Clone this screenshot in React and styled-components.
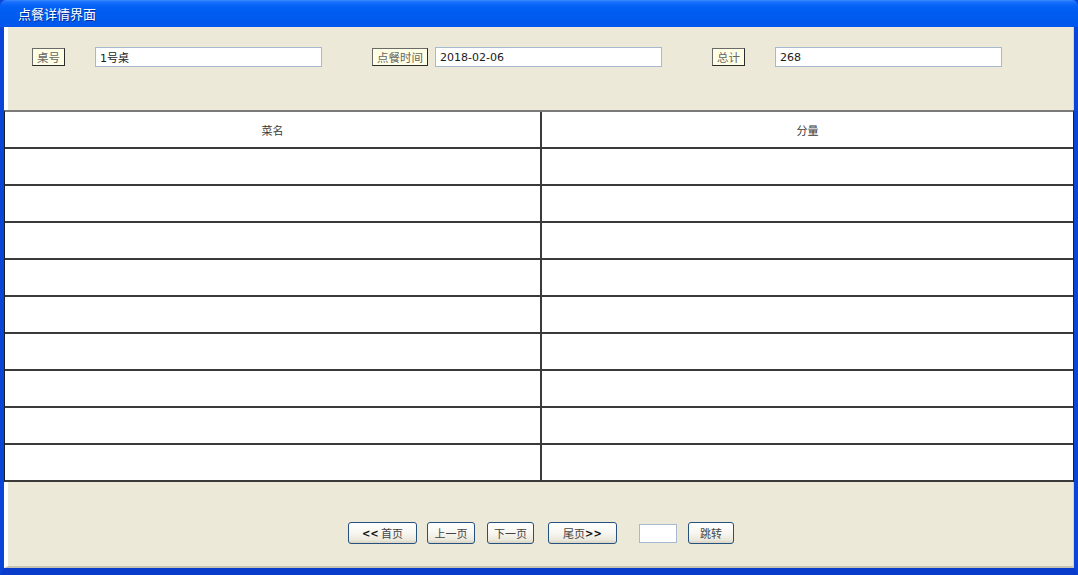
import React from "react";
import styled, { createGlobalStyle } from "styled-components";

const GlobalStyle = createGlobalStyle`
  html, body {
    margin: 0;
    padding: 0;
    background: #ffffff;
  }
  body {
    font-family: "DejaVu Sans", "Noto Sans CJK SC", sans-serif;
  }
`;

const Window = styled.div`
  width: 1078px;
  height: 575px;
  box-sizing: border-box;
  display: flex;
  flex-direction: column;
  background: #0a4fe0;
  border-left: 4px solid #0a45d8;
  border-right: 4px solid #0a45d8;
  border-bottom: 7px solid #0a3ccc;
  border-top: 0;
`;

const TitleBar = styled.div`
  height: 27px;
  margin: 0 -4px;
  padding-left: 18px;
  display: flex;
  align-items: center;
  background: linear-gradient(
    #3b8cff 0,
    #1a6ffc 2px,
    #0461f5 6px,
    #005cf0 50%,
    #0056ea 100%
  );
  border-radius: 6px 6px 0 0;
  color: #ffffff;
  font-family: "Noto Sans CJK SC", sans-serif;
  font-size: 13px;
  text-shadow: 1px 1px 0 #0a2e9a;
`;

const Body = styled.div`
  flex: 1;
  display: flex;
  flex-direction: column;
  background: #ffffff;
`;

const TopPanel = styled.div`
  height: 83px;
  box-sizing: border-box;
  background: #ece9d8;
  border-left: 4px solid #ffffff;
  border-right: 1px solid #d6d2c2;
  padding: 20px 0 0 24px;
  display: grid;
  grid-template-columns: repeat(3, 340px);
  align-items: start;
`;

const Field = styled.div`
  display: grid;
  grid-template-columns: 63px 227px;
  align-items: center;
`;

const Label = styled.span`
  justify-self: start;
  height: 18px;
  box-sizing: border-box;
  padding: 0 4px;
  display: flex;
  align-items: center;
  background: #ffffe6;
  border: 1px solid #2b2b2b;
  border-top-color: #6a6a6a;
  border-left-color: #6a6a6a;
  color: #666666;
  font-family: "Noto Sans CJK SC", sans-serif;
  font-size: 11.5px;
`;

const TextBox = styled.div`
  height: 20px;
  width: ${({ $w }) => $w || "227px"};
  box-sizing: border-box;
  background: #ffffff;
  border: 1px solid #a5b9cf;
  padding-left: 4px;
  display: flex;
  align-items: center;
  color: #1a1a1a;
  font-family: "DejaVu Sans", "Noto Sans CJK SC", sans-serif;
  font-size: 11px;
`;

const Table = styled.div`
  display: grid;
  grid-template-columns: 537px 1fr;
  grid-auto-rows: 37px;
  border-top: 2px solid #7a7a7a;
  border-left: 1px solid #1e1e1e;
  border-right: 1px solid #1e1e1e;
`;

const Cell = styled.div`
  box-sizing: border-box;
  border-bottom: 2px solid #3a3a3a;
  border-right: ${({ $first }) => ($first ? "2px solid #3a3a3a" : "0")};
  display: flex;
  align-items: center;
  justify-content: center;
  color: #3a3a3a;
  font-family: "Noto Sans CJK SC", sans-serif;
  font-size: 11px;
  background: #ffffff;
`;

const BottomPanel = styled.div`
  flex: 1;
  box-sizing: border-box;
  background: #ece9d8;
  border-left: 4px solid #ffffff;
  border-right: 1px solid #d6d2c2;
  border-bottom: 2px solid #c8c4b4;
  padding: 40px 0 0 340px;
  display: flex;
  align-items: flex-start;
`;

const Button = styled.button`
  height: 22px;
  width: ${({ $w }) => $w}px;
  margin-left: ${({ $ml }) => $ml || 0}px;
  padding: 0;
  box-sizing: border-box;
  border: 1px solid #245180;
  border-radius: 3px;
  background: linear-gradient(#ffffff 0, #f7f6f1 50%, #ebe8dc 85%, #d8d3c2 100%);
  color: #444444;
  font-family: "Noto Sans CJK SC", sans-serif;
  font-size: 11px;
  display: flex;
  align-items: center;
  justify-content: center;
  white-space: pre;
`;

const Arrow = styled.b`
  color: #111111;
  font-family: "DejaVu Sans", sans-serif;
  font-size: 10px;
`;

const PageInput = styled(TextBox)`
  height: 19px;
  margin-top: 2px;
  margin-left: ${({ $ml }) => $ml}px;
`;

const fields = [
  { label: "桌号", value: "1号桌" },
  { label: "点餐时间", value: "2018-02-06" },
  { label: "总计", value: "268" },
];

const rows = Array.from({ length: 9 });

export default function App() {
  return (
    <>
      <GlobalStyle />
      <Window>
        <TitleBar>点餐详情界面</TitleBar>
        <Body>
          <TopPanel>
            {fields.map((f) => (
              <Field key={f.label}>
                <Label>{f.label}</Label>
                <TextBox>{f.value}</TextBox>
              </Field>
            ))}
          </TopPanel>
          <Table>
            <Cell $first>菜名</Cell>
            <Cell>分量</Cell>
            {rows.map((_, i) => (
              <React.Fragment key={i}>
                <Cell $first />
                <Cell />
              </React.Fragment>
            ))}
          </Table>
          <BottomPanel>
            <Button $w={69}>
              <Arrow>&lt;&lt;</Arrow> 首页
            </Button>
            <Button $w={48} $ml={10}>上一页</Button>
            <Button $w={47} $ml={12}>下一页</Button>
            <Button $w={69} $ml={14}>
              尾页<Arrow>&gt;&gt;</Arrow>
            </Button>
            <PageInput $w="38px" $ml={22} />
            <Button $w={46} $ml={11}>跳转</Button>
          </BottomPanel>
        </Body>
      </Window>
    </>
  );
}
